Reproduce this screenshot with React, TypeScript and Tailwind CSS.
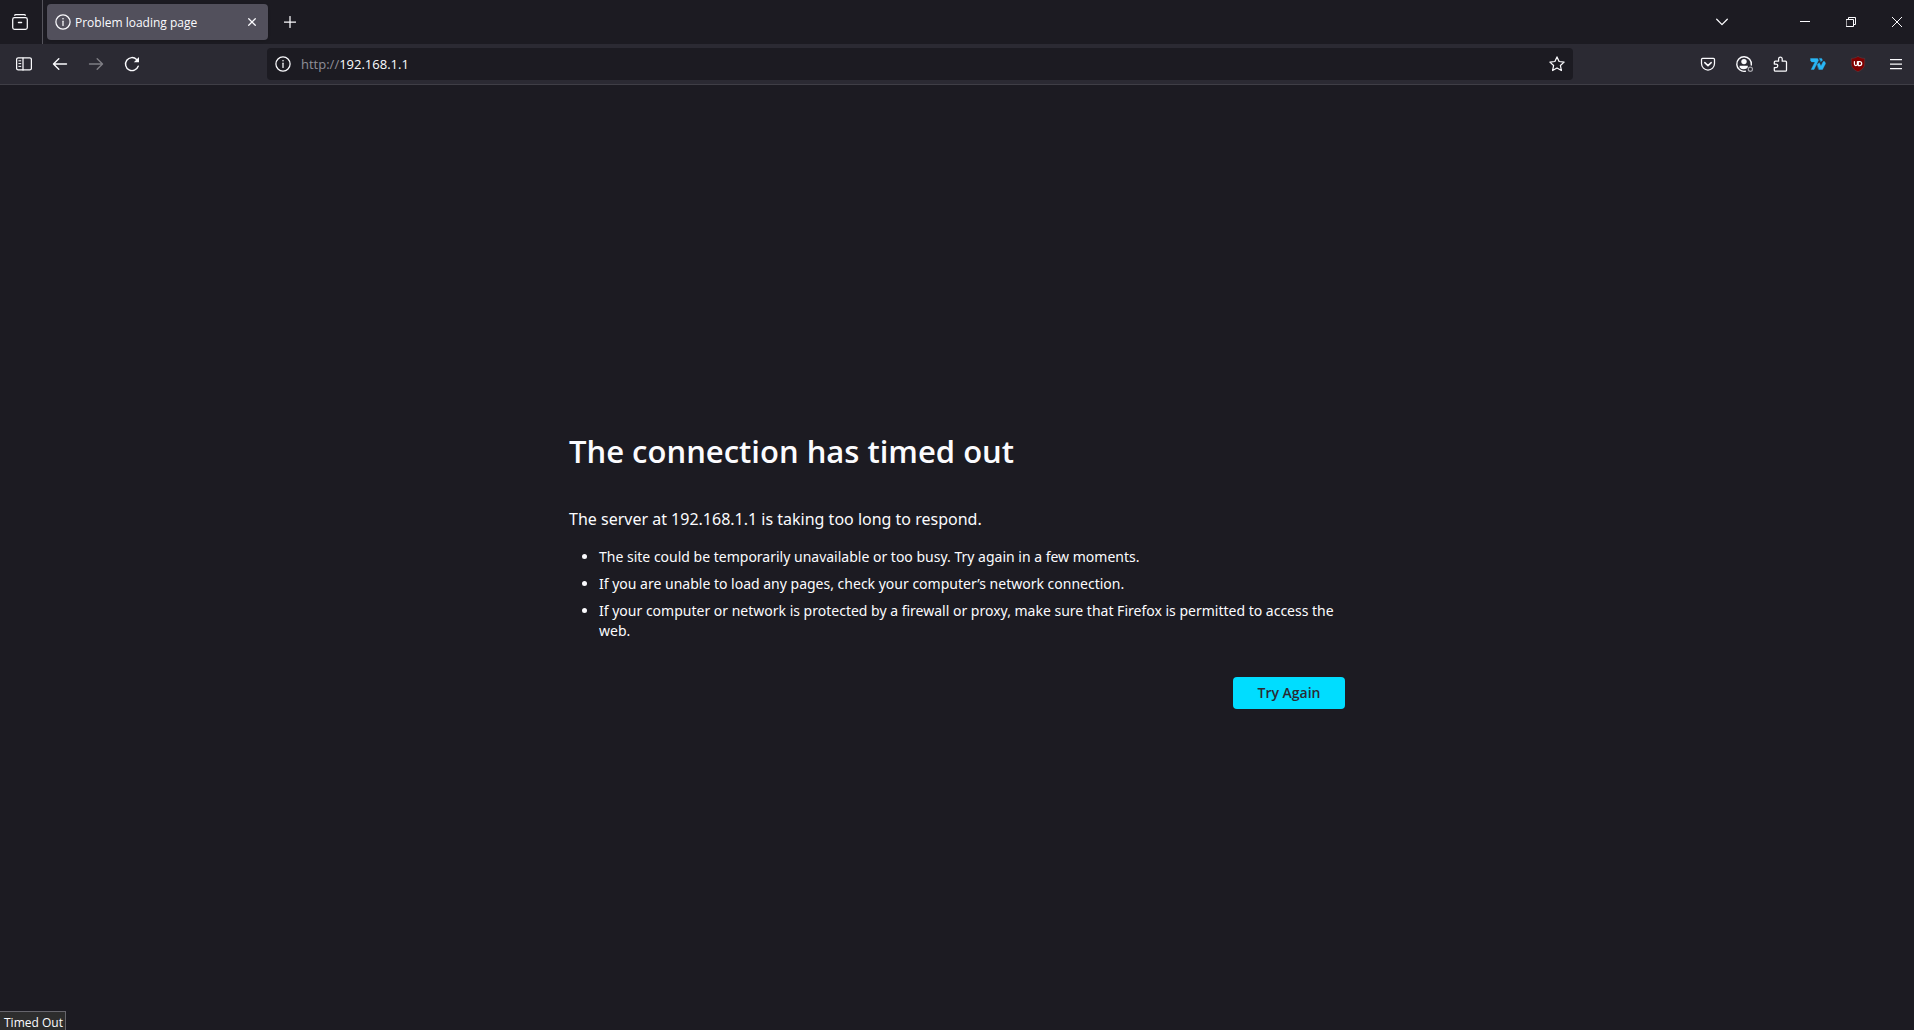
import React from "react";

type IconButtonProps = {
  label: string;
  className?: string;
  disabled?: boolean;
  children: React.ReactNode;
};

function IconButton({ label, className = "w-9", disabled, children }: IconButtonProps) {
  return (
    <button
      type="button"
      aria-label={label}
      disabled={disabled}
      className={`flex h-8 shrink-0 items-center justify-center rounded hover:bg-white/10 disabled:opacity-40 ${className}`}
    >
      {children}
    </button>
  );
}

function Icon({ children, size = 16 }: { children: React.ReactNode; size?: number }) {
  return (
    <svg
      width={size}
      height={size}
      viewBox={`0 0 ${size} ${size}`}
      fill="none"
      stroke="currentColor"
      strokeWidth="1.25"
      strokeLinecap="round"
      strokeLinejoin="round"
      aria-hidden="true"
      className="shrink-0"
    >
      {children}
    </svg>
  );
}

function InfoIcon() {
  return (
    <Icon>
      <circle cx="8" cy="8" r="7.1" />
      <path d="M8 7.2v4.2" />
      <circle cx="8" cy="4.8" r="0.8" fill="currentColor" stroke="none" />
    </Icon>
  );
}

function TabStrip() {
  return (
    <div className="flex h-11 items-center bg-[#1c1b22]">
      <div className="flex h-full w-[43px] shrink-0 items-center border-r border-[#55545c] pl-1">
        <IconButton label="Firefox View" className="w-8">
          <Icon>
            <path d="M2.6 1.2C3 .8 3.4.6 4 .6h8c.6 0 1 .2 1.4.6" />
            <rect x=".7" y="3.6" width="14.6" height="11.7" rx="1.8" />
            <path d="M6.5 8.4h3" strokeWidth="1.5" />
          </Icon>
        </IconButton>
      </div>
      <div className="ml-1 flex h-9 w-[221px] items-center rounded bg-[#52505c] pr-1 pl-2 shadow">
        <InfoIcon />
        <span className="ml-1 flex-1 truncate pt-0.5 text-[12px]">Problem loading page</span>
        <button type="button" aria-label="Close tab" className="flex size-6 items-center justify-center rounded hover:bg-white/10">
          <Icon size={8}>
            <path d="M.7.7l6.6 6.6M7.3.7L.7 7.3" />
          </Icon>
        </button>
      </div>
      <IconButton label="Open a new tab" className="ml-1 w-9">
        <Icon size={12}>
          <path d="M6 .5v11M.5 6h11" />
        </Icon>
      </IconButton>
      <div className="flex-1" />
      <IconButton label="List all tabs" className="mr-[42px] w-9">
        <Icon size={12}>
          <path d="M.7 3.2L6 8.6l5.3-5.4" />
        </Icon>
      </IconButton>
      <IconButton label="Minimize" className="w-[46px]">
        <Icon size={10}>
          <path d="M0 4.5h10" strokeWidth="1" strokeLinecap="butt" />
        </Icon>
      </IconButton>
      <IconButton label="Restore" className="w-[46px]">
        <Icon size={10}>
          <path d="M.5 2.5h7v7h-7zM2.5 2.5v-2h7v7h-2" strokeWidth="1" strokeLinejoin="miter" />
        </Icon>
      </IconButton>
      <IconButton label="Close" className="-mr-[6px] w-[46px]">
        <Icon size={10}>
          <path d="M0 0l10 10M10 0L0 10" strokeWidth="1" />
        </Icon>
      </IconButton>
    </div>
  );
}

function NavBar() {
  return (
    <div className="flex h-[41px] items-center border-b border-[#3f3e46] bg-[#2b2a33] pl-1.5">
      <IconButton label="Show sidebar">
        <Icon>
          <rect x=".6" y="1.9" width="14.8" height="12" rx="1.6" />
          <path d="M7 2v12" />
          <path d="M2.8 4.8h2M2.8 7.6h2M2.8 10.4h2" strokeWidth="1" />
        </Icon>
      </IconButton>
      <IconButton label="Go back">
        <Icon>
          <path d="M14.5 8H1.6M6.8 2.8L1.5 8l5.3 5.2" strokeWidth="1.4" />
        </Icon>
      </IconButton>
      <IconButton label="Go forward" disabled>
        <Icon>
          <path d="M1.5 8h12.9M9.2 2.8L14.5 8l-5.3 5.2" strokeWidth="1.4" />
        </Icon>
      </IconButton>
      <IconButton label="Reload current page">
        <Icon>
          <path d="M14.2 10.2A6.5 6.5 0 1 1 12.6 3.4" strokeWidth="1.4" />
          <path d="M15 1v5.2H9.8z" fill="currentColor" stroke="none" />
        </Icon>
      </IconButton>
      <div className="w-[117px] min-w-2" />
      <div className="flex h-8 min-w-0 flex-1 items-center rounded bg-[#1c1b22] pl-2">
        <button type="button" aria-label="Site information">
          <InfoIcon />
        </button>
        <span className="ml-2.5 pt-0.5 text-[13px] text-[#8f8f98]">http://</span>
        <input
          aria-label="Search or enter address"
          defaultValue="192.168.1.1"
          className="min-w-0 flex-1 bg-transparent pt-0.5 text-[13px] outline-none"
        />
        <IconButton label="Bookmark this page" className="w-8">
          <Icon>
            <path d="M8 .9l2.1 4.6 5 .6-3.7 3.4 1 5L8 12l-4.4 2.5 1-5L.9 6.1l5-.6z" />
          </Icon>
        </IconButton>
      </div>
      <div className="w-[117px] min-w-2" />
      <IconButton label="Save to Pocket">
        <Icon>
          <path d="M2.5 2.4h11c.6 0 1 .4 1 1v4.1a6.5 6.5 0 0 1-13 0V3.4c0-.6.4-1 1-1z" />
          <path d="M4.8 6.6L8 9.6l3.2-3" strokeWidth="1.5" />
        </Icon>
      </IconButton>
      <IconButton label="Account">
        <Icon size={18}>
          <path d="M16.3 10A7.3 7.3 0 1 0 10.4 16.2" strokeWidth="1.4" />
          <circle cx="9" cy="6.6" r="2.7" fill="currentColor" stroke="none" />
          <path d="M4.6 10.8h8.2v1.4l-1.2 1.4A6 6 0 0 1 4.6 12.4z" fill="currentColor" stroke="none" />
          <circle cx="15.4" cy="14.3" r="2.1" stroke="#a6a5ab" />
        </Icon>
      </IconButton>
      <IconButton label="Extensions">
        <Icon>
          <path d="M2.3 8V6.2c0-.6.4-1 1-1h3.300V2.900a1.800 1.800 0 0 1 3.600 0v2.300h3.300c.6 0 1 .4 1 1v8c0 .6-.4 1-1 1H3.300c-.6 0-1-.4-1-1v-2.600h1.700a1.800 1.800 0 0 0 0-3.600z" />
        </Icon>
      </IconButton>
      <IconButton label="7TV" className="w-10">
        <Icon>
          <g fill="#29b6f6" stroke="#29b6f6" strokeWidth=".4">
            <path d="M.6 2.6h7l.9 1.7-4.500 9.200H1.200L5 5.900H1.600L.4 4.300z" />
            <path d="M9.500 2.400h2.100l.9 1.900-1.600 1.300z" />
            <path d="M7.200 8.400l2.100-1.700 1.700 3.300 2.200-4.400h1.500l.9 1.900-3.100 6H9z" />
          </g>
        </Icon>
      </IconButton>
      <IconButton label="uBlock Origin" className="w-10">
        <Icon>
          <path
            d="M8 .4c2 1.3 4 1.900 6.700 2v5.200c0 4-3 6.600-6.700 8.100-3.700-1.500-6.700-4.100-6.700-8.100V2.400C4 2.300 6 1.700 8 .4z"
            fill="#800000"
            stroke="#5c3a40"
            strokeWidth=".6"
          />
          <path
            d="M4.400 5.600v2.500a1.500 1.500 0 0 0 3 0V5.600M8.300 9.600V5.600h1.400a2 2 0 0 1 0 4z"
            stroke="#fff"
            strokeWidth="1.2"
          />
        </Icon>
      </IconButton>
      <IconButton label="Open application menu">
        <Icon size={12}>
          <path d="M.5 1.500h11M.5 6h11M.5 10.500h11" />
        </Icon>
      </IconButton>
    </div>
  );
}

const hints = [
  "The site could be temporarily unavailable or too busy. Try again in a few moments.",
  "If you are unable to load any pages, check your computer’s network connection.",
  "If your computer or network is protected by a firewall or proxy, make sure that Firefox is permitted to access the web.",
];

export default function App() {
  return (
    <div className="flex min-h-screen flex-col overflow-hidden bg-[#1c1b22] font-['Open_Sans','Noto_Sans',sans-serif] text-[#fbfbfe]">
      <header>
        <TabStrip />
        <NavBar />
      </header>
      <main className="relative flex flex-1 flex-col items-center justify-center px-12 pt-6">
        <div className="w-full max-w-[776px]">
          <h1 className="text-[31px] leading-10 font-semibold">The connection has timed out</h1>
          <p className="mt-9 font-['Noto_Sans',sans-serif] text-[16px] leading-6">
            The server at 192.168.1.1 is taking too long to respond.
          </p>
          <ul className="mt-4 flex list-disc flex-col gap-[7px] pl-[30px] font-['Noto_Sans',sans-serif] text-[14px] leading-5">
            {hints.map((hint) => (
              <li key={hint}>{hint}</li>
            ))}
          </ul>
          <div className="mt-9 flex justify-end">
            <button type="button" className="h-8 min-w-28 rounded bg-[#00ddff] px-6 text-[14px] font-semibold text-[#2b2a33]">
              Try Again
            </button>
          </div>
        </div>
        <div
          role="status"
          className="absolute bottom-0 left-0 border-t border-r border-[#66656c] bg-[#2d2d2d] pt-1 pr-0.5 pl-1 text-[12px] leading-[14px]"
        >
          Timed Out
        </div>
      </main>
    </div>
  );
}
